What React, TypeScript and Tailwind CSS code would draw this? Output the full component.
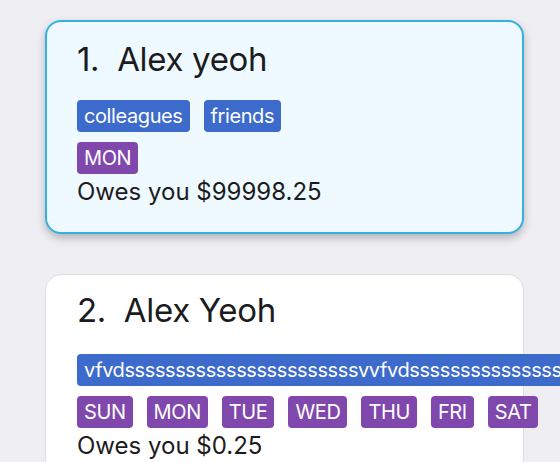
const days = ["SUN", "MON", "TUE", "WED", "THU", "FRI", "SAT"];

const Tag = ({ label, color }: { label: string; color: "blue" | "purple" }) => (
  <span
    className={`shrink-0 h-8 px-[7px] rounded-[4px] text-white text-[20px] leading-8 tracking-[-0.02em] whitespace-nowrap ${
      color === "blue" ? "bg-[#3d6bcc]" : "bg-[#8048ad]"
    }`}
  >
    {label}
  </span>
);

const App = () => {
  return (
    <div
      className="min-h-screen bg-[#efeef3] pt-[20px] pb-10 overflow-hidden text-[#1c1c1e]"
      style={{ fontFamily: "Inter, 'Noto Sans', sans-serif" }}
    >
      <div className="ml-[45px] w-[479px] rounded-2xl border-2 border-[#36b0e0] bg-[#eefaff] pt-[17px] pb-[26px] pl-[30px] shadow-[0_4px_8px_rgba(0,0,0,0.25)]">
        <h1 className="text-[33px] leading-10 tracking-[-0.01em] whitespace-pre">1.  Alex yeoh</h1>
        <div className="mt-[21px] flex gap-[14px]">
          <Tag label="colleagues" color="blue" />
          <Tag label="friends" color="blue" />
        </div>
        <div className="mt-[10px] flex gap-[14px]">
          <Tag label="MON" color="purple" />
        </div>
        <p className="mt-[4px] text-[24px] leading-7">Owes you $99998.25</p>
      </div>

      <div className="mt-[40px] ml-[45px] w-[479px] rounded-2xl border border-[#dedee3] bg-white pt-[15px] pb-6 pl-[31px]">
        <h1 className="text-[33px] leading-10 tracking-[-0.01em] whitespace-pre">2.  Alex Yeoh</h1>
        <div className="mt-[24px] flex gap-[14px]">
          <Tag
            label="vfvdsssssssssssssssssssssssvvfvdssssssssssssssssssssssssssssssssss"
            color="blue"
          />
        </div>
        <div className="mt-[10px] flex gap-[14px]">
          {days.map((d) => (
            <Tag key={d} label={d} color="purple" />
          ))}
        </div>
        <p className="mt-[4px] text-[24px] leading-7">Owes you $0.25</p>
      </div>
    </div>
  );
};

export default App;
